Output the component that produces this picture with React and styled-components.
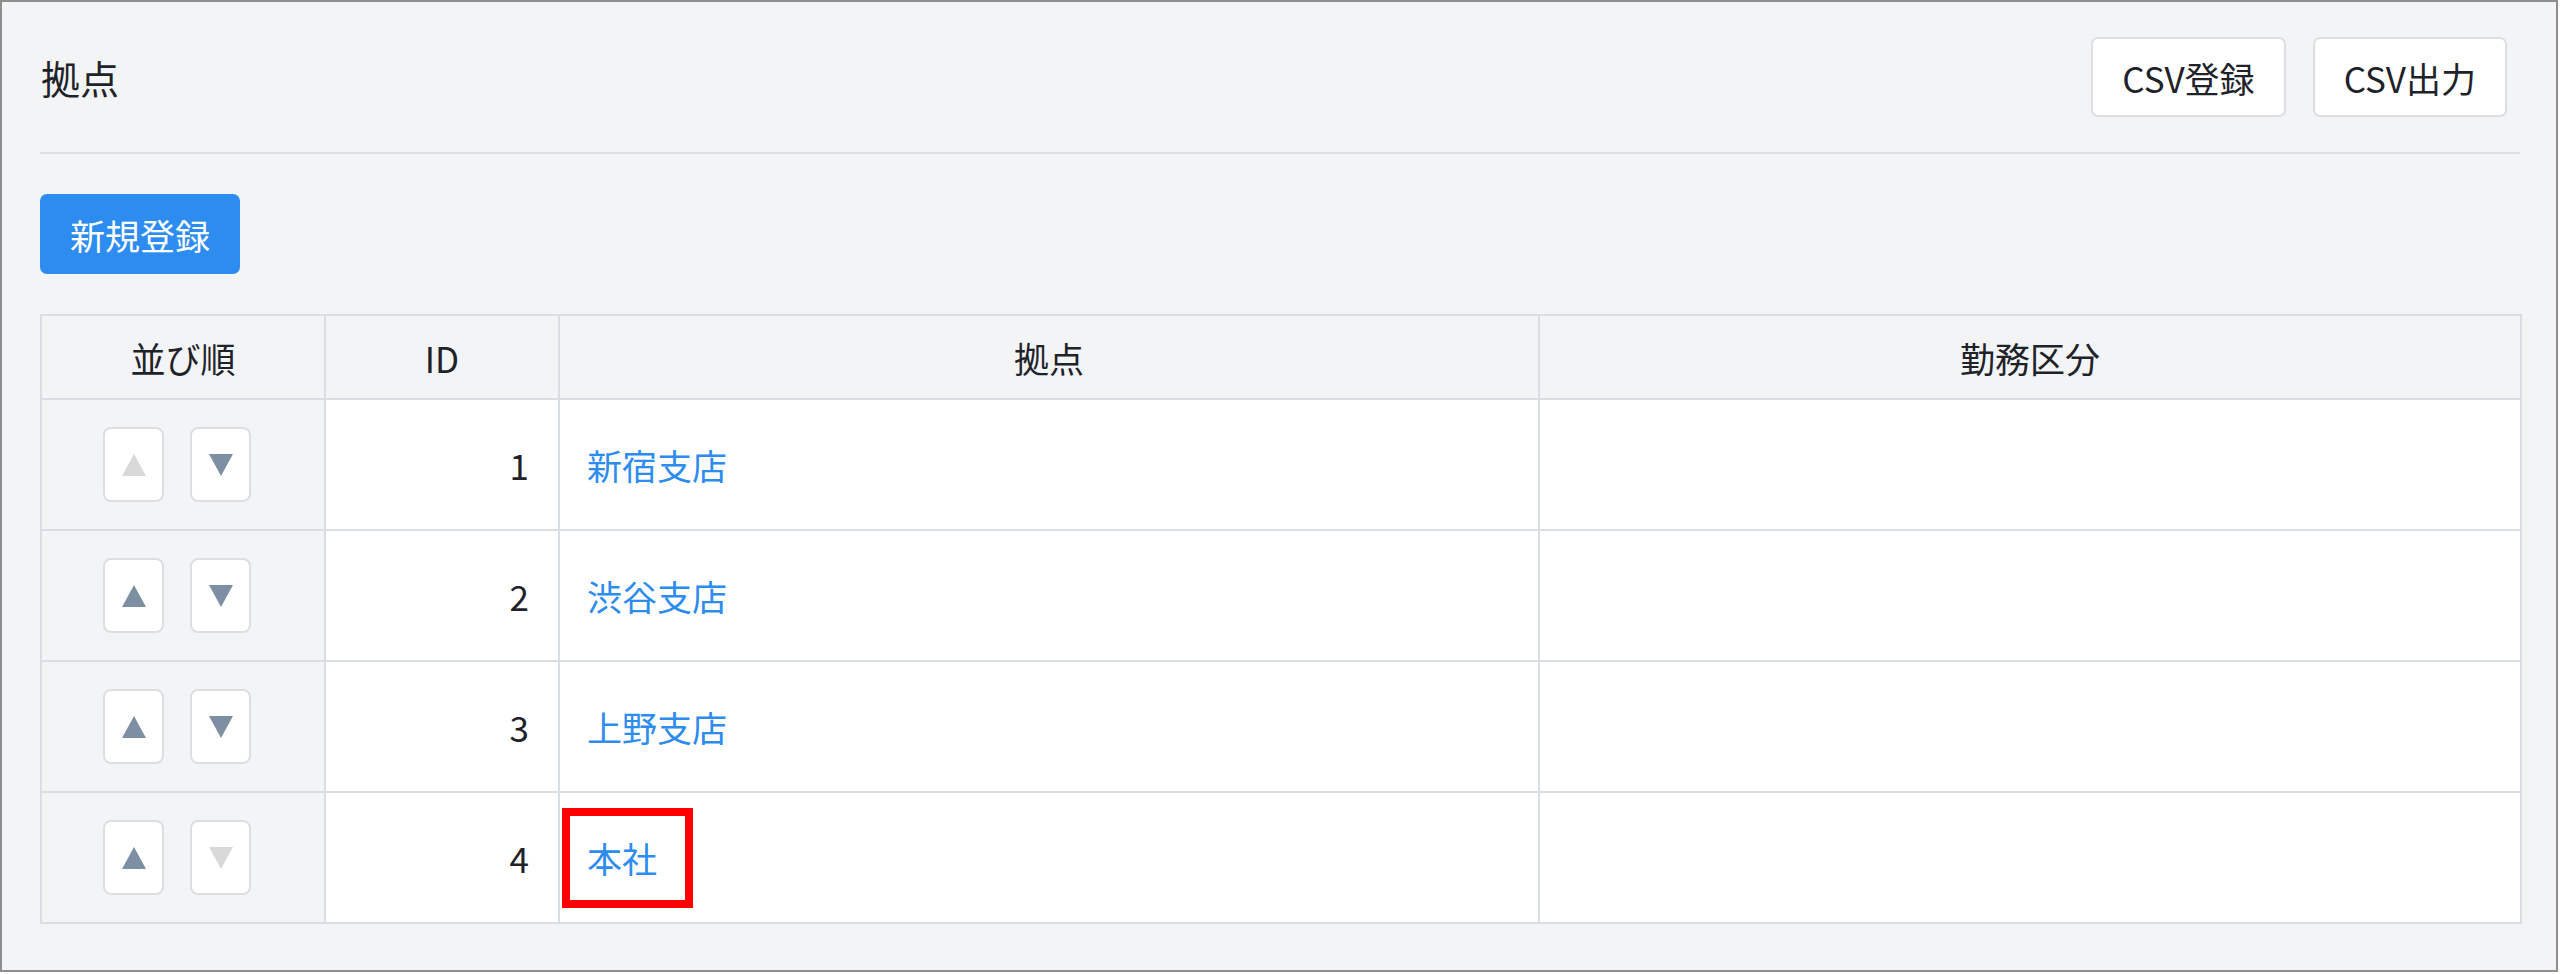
import React from 'react';
import styled, { createGlobalStyle } from 'styled-components'

const GlobalStyle = createGlobalStyle`
  html, body {
    margin: 0;
    padding: 0;
    background: #ffffff;
  }
  body {
    font-family: "Noto Sans CJK JP", "Noto Sans", sans-serif;
    color: #1f2329;
  }
`

const Frame = styled.div`
  box-sizing: border-box;
  width: 2558px;
  height: 972px;
  border: 2px solid #8e8e8e;
  background-color: #f3f4f6;
  padding: 35px 36px 0 38px;
`

const Header = styled.div`
  display: flex;
  align-items: center;
  justify-content: space-between;
  height: 80px;
  padding-right: 13px;
`

const Title = styled.h1`
  margin: 0;
  padding-left: 1px;
  font-size: 39px;
  font-weight: 400;
  line-height: 1;
`

const Actions = styled.div`
  display: flex;
  gap: 27px;
`

const Button = styled.button`
  box-sizing: border-box;
  height: 80px;
  padding: 0 ${({$primary}) => $primary ? '28px' : '29px'};
  border-radius: 7px;
  border: 2px solid ${({$primary}) => $primary ? '#2d8cf0' : '#dcdee2'};
  background-color: ${({$primary}) => $primary ? '#2d8cf0' : '#ffffff'};
  color: ${({$primary}) => $primary ? '#ffffff' : '#1f2329'};
  font-family: inherit;
  font-size: 35px;
  line-height: 1;
  cursor: pointer;
`

const Divider = styled.hr`
  margin: 35px 0 40px;
  border: 0;
  height: 2px;
  background-color: #dcdee2;
`

const Table = styled.table`
  margin-top: 40px;
  width: 2480px;
  border-collapse: collapse;
  table-layout: fixed;
  background-color: #ffffff;
`

const Col = styled.col`
  width: ${({$w}) => $w}px;
`

const HeadRow = styled.tr`
  height: 84px;
`

const BodyRow = styled.tr`
  height: 131px;
`

const Th = styled.th`
  border: 2px solid #d9dee5;
  background-color: #f3f4f6;
  font-size: 35px;
  font-weight: 400;
  text-align: center;
  color: #1f2329;
`

const Td = styled.td`
  border: 2px solid #d9dee5;
  background-color: ${({$muted}) => $muted ? '#f3f4f6' : '#ffffff'};
  font-size: 35px;
  text-align: ${({$align}) => $align || 'left'};
  padding: ${({$pad}) => $pad || '0'};
  color: #1f2329;
`

const SortGroup = styled.div`
  display: flex;
  justify-content: center;
  gap: 26px;
  padding-right: 12px;
`

const SortButton = styled.button`
  box-sizing: border-box;
  width: 61px;
  height: 75px;
  display: flex;
  align-items: center;
  justify-content: center;
  padding: 0;
  border: 2px solid #dcdee2;
  border-radius: 8px;
  background-color: #ffffff;
  cursor: ${({disabled}) => disabled ? 'default' : 'pointer'};
`

const Link = styled.a`
  position: relative;
  display: inline-block;
  line-height: 52px;
  color: #2d8cf0;
  text-decoration: none;
  cursor: pointer;

  ${({$marked}) => $marked && `
    &::after {
      content: "";
      position: absolute;
      left: -25px;
      right: -36px;
      top: -24px;
      bottom: -24px;
      border: 8px solid #ff0000;
    }
  `}
`

function Arrow({ dir, off }) {
  const points = dir === 'up' ? '12,0 24,22 0,22' : '0,0 24,0 12,22'
  return (
    <svg width="24" height="22" viewBox="0 0 24 22">
      <polygon points={points} fill={off ? '#d9d9d9' : '#7d8fa3'} />
    </svg>
  )
}

const rows = [
  { id: 1, name: '新宿支店' },
  { id: 2, name: '渋谷支店' },
  { id: 3, name: '上野支店' },
  { id: 4, name: '本社', marked: true },
]

function App() {
  return (
    <>
      <GlobalStyle />
      <Frame>
        <Header>
          <Title>拠点</Title>
          <Actions>
            <Button>CSV登録</Button>
            <Button>CSV出力</Button>
          </Actions>
        </Header>
        <Divider />
        <Button $primary>新規登録</Button>
        <Table>
          <colgroup>
            <Col $w={284} />
            <Col $w={234} />
            <Col $w={980} />
            <Col $w={982} />
          </colgroup>
          <thead>
            <HeadRow>
              <Th>並び順</Th>
              <Th>ID</Th>
              <Th>拠点</Th>
              <Th>勤務区分</Th>
            </HeadRow>
          </thead>
          <tbody>
            {rows.map((row, i) => (
              <BodyRow key={row.id}>
                <Td $muted>
                  <SortGroup>
                    <SortButton disabled={i === 0}>
                      <Arrow dir="up" off={i === 0} />
                    </SortButton>
                    <SortButton disabled={i === rows.length - 1}>
                      <Arrow dir="down" off={i === rows.length - 1} />
                    </SortButton>
                  </SortGroup>
                </Td>
                <Td $align="right" $pad="0 29px 0 0">{row.id}</Td>
                <Td $pad="0 0 0 27px">
                  <Link $marked={row.marked}>{row.name}</Link>
                </Td>
                <Td />
              </BodyRow>
            ))}
          </tbody>
        </Table>
      </Frame>
    </>
  )
}

export default App;
